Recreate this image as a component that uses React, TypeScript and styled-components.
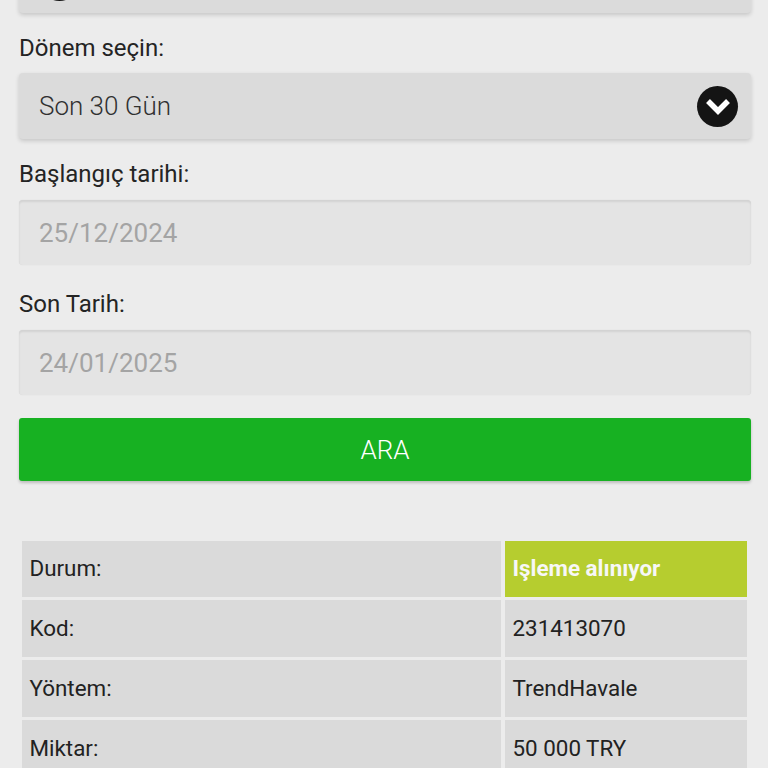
import * as React from "react";
import styled, { createGlobalStyle } from "styled-components";

const GlobalStyle = createGlobalStyle`
  html, body {
    margin: 0;
    height: 100%;
    overflow: hidden;
    background-color: #ececec;
    font-family: Roboto, "Liberation Sans", sans-serif;
  }
`;

const rows = [
  { label: "Durum:", value: "Işleme alınıyor", status: true },
  { label: "Kod:", value: "231413070" },
  { label: "Yöntem:", value: "TrendHavale" },
  { label: "Miktar:", value: "50 000 TRY" },
];

function Chevron() {
  return (
    <ChevronBadge>
      <svg width="28" height="20" viewBox="0 0 28 20">
        <path d="M4 5l10 10 10-10" fill="none" stroke="#fff" strokeWidth="5.5" strokeLinejoin="miter" />
      </svg>
    </ChevronBadge>
  );
}

export default function App() {
  return (
    <>
      <GlobalStyle />
      <Page>
        <TopSelect>
          <Chevron />
        </TopSelect>

        <Label>Dönem seçin:</Label>
        <Select>
          Son 30 Gün
          <Chevron />
        </Select>

        <Label $top={18}>Başlangıç tarihi:</Label>
        <DateInput>25/12/2024</DateInput>

        <Label $top={22}>Son Tarih:</Label>
        <DateInput>24/01/2025</DateInput>

        <SearchButton>ARA</SearchButton>

        <ResultTable>
          {rows.map((row) => (
            <React.Fragment key={row.label}>
              <Cell>{row.label}</Cell>
              <Cell $status={row.status}>{row.value}</Cell>
            </React.Fragment>
          ))}
        </ResultTable>
      </Page>
    </>
  );
}

const Page = styled.div`
  height: 768px;
  overflow: hidden;
  padding: 0 17px 0 19px;
`;

const Select = styled.div`
  height: 66px;
  box-sizing: border-box;
  display: flex;
  align-items: center;
  justify-content: space-between;
  padding: 0 13px 0 20px;
  background-color: #dbdbdb;
  border-radius: 4px;
  box-shadow: 0 2px 4px rgba(0, 0, 0, 0.16);
  font-size: 26px;
  font-weight: 300;
  color: #303030;
`;

const TopSelect = styled(Select)`
  margin-top: -53px;
`;

const ChevronBadge = styled.span`
  width: 41px;
  height: 41px;
  border-radius: 50%;
  background-color: #141414;
  display: flex;
  align-items: center;
  justify-content: center;
`;

const Label = styled.div<{ $top?: number }>`
  height: 34px;
  margin-top: ${(p) => p.$top ?? 18}px;
  margin-bottom: 8px;
  display: flex;
  align-items: center;
  font-size: 24px;
  color: #242424;
`;

const DateInput = styled.div`
  height: 65px;
  box-sizing: border-box;
  display: flex;
  align-items: center;
  padding-left: 20px;
  margin-top: 9px;
  background-color: #e4e4e4;
  border-radius: 4px;
  box-shadow: inset 0 2px 2px rgba(0, 0, 0, 0.08), 0 0 1px rgba(0, 0, 0, 0.12);
  font-size: 26px;
  color: #a4a4a4;
`;

const SearchButton = styled.div`
  height: 63px;
  margin-top: 23px;
  display: flex;
  align-items: center;
  justify-content: center;
  background-color: #17b122;
  border-radius: 3px;
  box-shadow: 0 2px 3px rgba(0, 0, 0, 0.2);
  font-size: 26px;
  font-weight: 300;
  color: #fff;
`;

const ResultTable = styled.div`
  margin: 60px 3px 0 3px;
  display: grid;
  grid-template-columns: 479px 242px;
  grid-template-rows: 55.5px;
  grid-auto-rows: 56.5px;
  gap: 3.5px 4px;
`;

const Cell = styled.div<{ $status?: boolean }>`
  display: flex;
  align-items: center;
  padding: 0 0 1px 7.5px;
  background-color: ${(p) => (p.$status ? "#b6cd2f" : "#dadada")};
  font-size: 22.4px;
  font-weight: ${(p) => (p.$status ? 700 : 400)};
  color: ${(p) => (p.$status ? "#f7f7f7" : "#222")};
`;
